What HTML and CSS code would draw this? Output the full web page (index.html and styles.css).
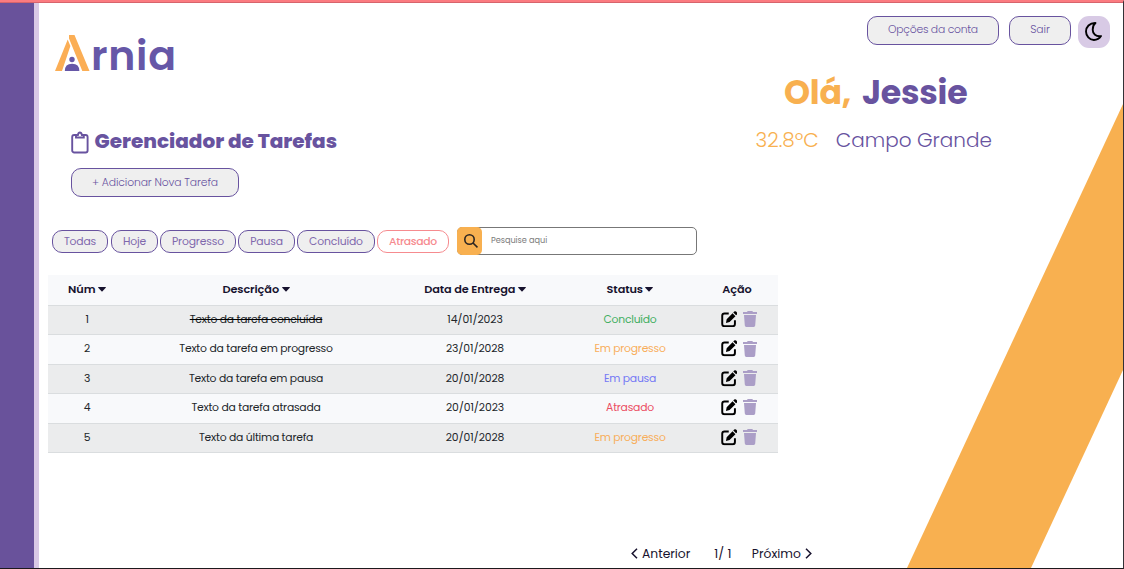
FILE: index.html
```html
<!DOCTYPE html>
<html lang="pt-BR">
<head>
<meta charset="utf-8">
<title>Arnia - Gerenciador de Tarefas</title>
<link rel="stylesheet" href="styles.css">
</head>
<body>
<svg class="sprite" aria-hidden="true">
  <symbol id="edit" viewBox="0 0 16 16"><path d="M7.500 2.400H3.400Q1.200 2.400 1.200 4.600v8q0 2.200 2.200 2.200h7.900q2.200 0 2.200-2.200V9" fill="none" stroke="#000" stroke-width="1.900"/><path d="M4.800 11.600l.7-3.700 5.700-5.700 2.800 2.800-5.700 5.700zM11.900 1.500l.9-.9q.9-.8 1.800 0l.9.900q.8.900 0 1.800l-.9.900z"/></symbol>
  <symbol id="trash" viewBox="0 0 14 16"><path d="M0 1h4l.7-1h4.600l.7 1h4v2H0zM1 4h12l-.8 10.600q-.1 1.400-1.500 1.400H3.300q-1.400 0-1.500-1.400z"/></symbol>
  <symbol id="caret" viewBox="0 0 8 5"><path d="M.5 0h7q.7.2.2.8L4.500 4.300q-.5.400-1 0L.3.800Q-.2.200.5 0z"/></symbol>
</svg>
<div class="page">
  <aside class="sidebar"></aside>
  <svg class="stripe" viewBox="0 0 216 465"><polygon points="216,1 216,267 124,465 0,465" fill="#f8b050"/></svg>
  <main class="main">
    <section class="tasks">
      <div class="logo">
        <svg width="35" height="37" viewBox="0 0 35 37"><path d="M14 0h5.500L34.500 36h-7.200L14 3.500zM12.700 4.500l2.700 6.500L7 36H0z" fill="#fbae55"/><circle cx="17" cy="24.500" r="2.700" fill="#6657a7"/><path d="M9.800 36q0-7.300 7.300-7.300t7.300 7.300z" fill="#6657a7"/></svg>
        <span class="logo-text">rnia</span>
      </div>
      <h1 class="title">
        <svg width="18" height="23" viewBox="0 0 18 23" fill="none" stroke="#68539f" stroke-width="1.900"><rect x="1.200" y="4" width="15.400" height="17.500" rx="2"/><path d="M5 4v2.500h7.800V4h-1.900q-.5-2.500-2-2.500T6.900 4z" fill="#fff"/></svg>
        <span>Gerenciador de Tarefas</span>
      </h1>
      <button class="btn add">+ Adicionar Nova Tarefa</button>
      <div class="toolbar">
        <button class="chip todas">Todas</button><button class="chip hoje">Hoje</button><button class="chip progresso">Progresso</button><button class="chip pausa">Pausa</button><button class="chip concluido">Concluído</button><button class="chip late">Atrasado</button>
        <div class="search">
          <span class="search-icon"><svg width="14" height="14" viewBox="0 0 14 14" fill="none" stroke="#2c2522" stroke-width="1.600"><circle cx="5.500" cy="5.500" r="4.700"/><path d="M9 9l4.500 4.300"/></svg></span>
          <span class="placeholder">Pesquise aqui</span>
        </div>
      </div>
      <div class="table">
        <div class="row head"><span>Núm<svg class="caret"><use href="#caret"/></svg></span><span>Descrição<svg class="caret"><use href="#caret"/></svg></span><span>Data de Entrega<svg class="caret"><use href="#caret"/></svg></span><span>Status<svg class="caret"><use href="#caret"/></svg></span><span>Ação</span></div>
        <div class="row odd"><span>1</span><span class="done">Texto da tarefa concluída</span><span class="date">14/01/2023</span><span class="green">Concluído</span><span class="actions"><svg class="edit"><use href="#edit"/></svg><svg class="trash"><use href="#trash"/></svg></span></div>
        <div class="row"><span>2</span><span>Texto da tarefa em progresso</span><span class="date">23/01/2028</span><span class="orange">Em progresso</span><span class="actions"><svg class="edit"><use href="#edit"/></svg><svg class="trash"><use href="#trash"/></svg></span></div>
        <div class="row odd low"><span>3</span><span>Texto da tarefa em pausa</span><span class="date">20/01/2028</span><span class="blue">Em pausa</span><span class="actions"><svg class="edit"><use href="#edit"/></svg><svg class="trash"><use href="#trash"/></svg></span></div>
        <div class="row"><span>4</span><span>Texto da tarefa atrasada</span><span class="date">20/01/2023</span><span class="red">Atrasado</span><span class="actions"><svg class="edit"><use href="#edit"/></svg><svg class="trash"><use href="#trash"/></svg></span></div>
        <div class="row odd low"><span>5</span><span>Texto da última tarefa</span><span class="date">20/01/2028</span><span class="orange">Em progresso</span><span class="actions"><svg class="edit"><use href="#edit"/></svg><svg class="trash"><use href="#trash"/></svg></span></div>
      </div>
      <nav class="pager">
        <span class="prev"><svg width="7" height="11" viewBox="0 0 7 11"><path d="M6 .8L1.200 5.500 6 10.200"/></svg>Anterior</span>
        <span class="count">1/ 1</span>
        <span class="next">Próximo<svg width="7" height="11" viewBox="0 0 7 11"><path d="M1 .8l4.800 4.700L1 10.200"/></svg></span>
      </nav>
    </section>
    <section class="account">
      <div class="account-bar">
        <button class="btn options">Opções da conta</button>
        <button class="btn exit">Sair</button>
        <button class="theme"><svg width="17" height="19" viewBox="0 0 17 19"><path d="M10.500 1C4.500.8 1 5 1 9.500s3.500 8.600 8 8.500c3.300 0 5.500-1.600 7-3.900-5 .7-8.300-2-8.300-6.400 0-3 .8-5.200 2.800-6.700z" fill="none" stroke="#000" stroke-width="1.900" stroke-linejoin="round"/></svg></button>
      </div>
      <div class="hello"><span class="ola">Olá,</span><span class="name">Jessie</span></div>
      <div class="weather"><span class="temp">32.8ºC</span><span class="city">Campo Grande</span></div>
    </section>
  </main>
</div>
</body>
</html>
```

FILE: styles.css
```css
* { box-sizing: border-box; }
body { margin: 0; font-family: Poppins, Inter, sans-serif; color: #17122e; }
button { font-family: inherit; padding: 0; white-space: nowrap; }
svg { flex: none; }
.sprite { display: none; }
.page {
  position: relative;
  display: flex;
  width: 1124px;
  height: 569px;
  overflow: hidden;
  background: #fff;
  border-top: 2px solid #fb7b80;
  border-right: 1px solid #333136;
  border-bottom: 1px solid #1d191d;
  box-shadow: inset 0 1px #d7646c;
}
.sidebar { width: 39px; margin-top: 1px; background: #69529b; border-right: 5px solid #d9c9e5; }
.stripe { position: absolute; right: 0; bottom: 0; width: 216px; height: 465px; }
.main { position: relative; display: flex; flex: 1; }
.tasks { display: flex; flex-direction: column; align-items: flex-start; width: 739px; padding: 33px 0 0 9px; }
.logo { display: flex; height: 37px; margin-left: 7px; }
.logo-text { margin: 2px 0 0 1px; font-size: 41px; font-weight: 600; line-height: 37px; letter-spacing: .7px; color: #6657a7; }
.title { display: flex; align-items: center; gap: 5.500px; height: 26px; margin: 56px 0 0 23px; font-size: 20px; font-weight: 800; color: #68539f; white-space: nowrap; }
.title svg { margin-top: 3px; }
.title span { line-height: 24px; margin-top: -1px; }
.btn { height: 29px; border: 1px solid #68539f; border-radius: 10px; background: #efefef; color: #68539f; font-size: 10.800px; font-weight: 300; letter-spacing: -.12px; }
.add { width: 168px; margin: 14px 0 0 23px; }
.toolbar { display: flex; align-items: center; height: 28px; margin: 30px 0 0 4px; }
.chip { height: 23px; margin-right: 2px; padding-top: 1px; border: 1px solid #68539f; border-radius: 10px; background: #efefef; color: #8068ad; font-size: 10.800px; letter-spacing: -.15px; }
.todas { width: 56px; margin-right: 3px; }
.hoje { width: 47px; }
.progresso { width: 76px; }
.pausa { width: 57px; }
.concluido { width: 78px; }
.late { width: 72px; margin-right: 8px; border-color: #f68b8f; background: #fff; color: #f68b8f; font-weight: 500; letter-spacing: -.3px; }
.search { display: flex; align-items: center; width: 240px; height: 28px; border: 1px solid #777; border-radius: 5px; }
.search-icon { display: flex; align-items: center; justify-content: center; width: 25px; height: 28px; margin-left: -1px; padding-left: 2px; border-radius: 5px; background: #f8b050; }
.placeholder { margin: -2px 0 0 9px; font-size: 8.200px; letter-spacing: -.05px; color: #7b7b7b; }
.table { width: 730px; margin-top: 20px; font-size: 10.800px; text-align: center; }
.row { display: grid; grid-template-columns: 78px 260px 178px 132px 82px; align-items: center; height: 29.400px; padding-bottom: 1px; border-bottom: 1px solid #dadddf; background: #f8f9fb; color: #212529; font-weight: 400; letter-spacing: -.23px; white-space: nowrap; }
.odd { background: #ebeced; }
.low { padding-bottom: 0; }
.low .trash { margin-top: -2px; }
.low .edit { margin-top: -1px; }
.head { height: 31px; padding-bottom: 2px; color: #17122e; font-size: 11.300px; font-weight: 600; letter-spacing: -.1px; }
.caret { width: 8px; height: 5px; margin: 0 0 1px 2.500px; fill: #17122e; }
.date { letter-spacing: -.1px; }
.done { text-decoration: line-through #000; }
.green { color: #3fae61; }
.orange { color: #f8ae5b; }
.blue { color: #7478f5; }
.red { color: #eb4d62; }
.actions { display: flex; align-items: center; gap: 6px; padding-left: 24.500px; }
.edit { width: 16.500px; height: 16.500px; margin-top: -1px; }
.trash { width: 14px; height: 16px; margin-top: -1px; fill: #ab9ec7; }
.pager { display: flex; height: 18px; margin: 92px 0 0 583px; font-size: 12.300px; line-height: 18px; white-space: nowrap; }
.pager svg { fill: none; stroke: #17122e; stroke-width: 1.500; }
.pager span { display: flex; align-items: center; gap: 4px; }
.count { margin: 0 20.500px 0 24px; }
.account { display: flex; flex: 1; flex-direction: column; padding: 13px 13px 0 0; }
.account-bar { display: flex; justify-content: flex-end; }
.options { width: 132px; margin: 1px 10px 0 0; letter-spacing: -.25px; }
.exit { width: 62px; margin: 1px 7px 0 0; }
.theme { display: flex; align-items: center; justify-content: center; width: 32px; height: 32px; margin-top: 1px; padding: 0 2px 1px 0; border: 0; border-radius: 11px; background: #d8cae5; }
.btn.options, .btn.exit { padding-bottom: 2px; }
.hello { display: flex; gap: 11px; height: 48px; margin: 21px 0 0 6px; font-size: 33.200px; font-weight: 700; line-height: 48px; letter-spacing: -.25px; color: #68539f; white-space: nowrap; }
.weather { display: flex; gap: 17px; height: 30px; margin: 8px 0 0 -22.500px; font-size: 20px; font-weight: 300; line-height: 30px; color: #68539f; white-space: nowrap; }
.ola, .temp { color: #f8b050; }
```
